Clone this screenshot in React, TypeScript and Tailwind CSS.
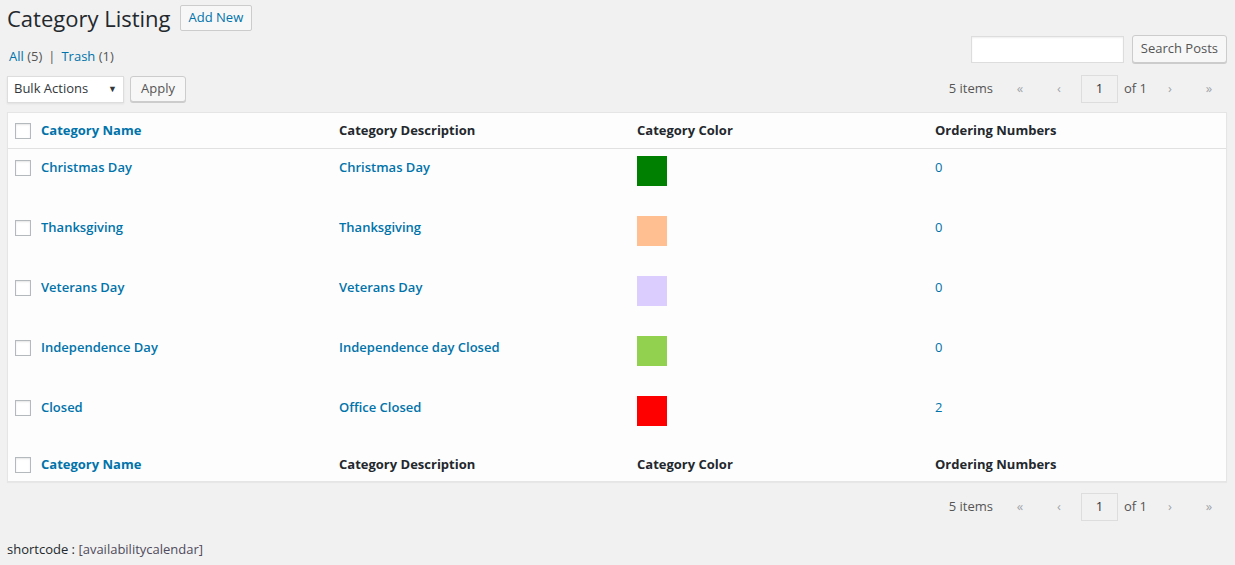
const rows = [
  { name: "Christmas Day", desc: "Christmas Day", color: "bg-[#008000]", order: "0" },
  { name: "Thanksgiving", desc: "Thanksgiving", color: "bg-[#ffbf91]", order: "0" },
  { name: "Veterans Day", desc: "Veterans Day", color: "bg-[#dccdff]", order: "0" },
  { name: "Independence Day", desc: "Independence day Closed", color: "bg-[#92d050]", order: "0" },
  { name: "Closed", desc: "Office Closed", color: "bg-[#ff0000]", order: "2" },
];

function Check() {
  return <span className="block w-4 h-4 border border-[#b4b9be] bg-white shadow-[inset_0_1px_2px_rgba(0,0,0,0.1)]" />;
}

function HeadRow({ h }: { h: string }) {
  return (
    <div className={`flex items-center ${h} text-[13px] font-bold text-[#23282d]`}>
      <div className="w-[33px] pl-[7px]">
        <Check />
      </div>
      <div className="w-[298px] text-[#0073aa]">Category Name</div>
      <div className="w-[298px]">Category Description</div>
      <div className="w-[298px]">Category Color</div>
      <div className="flex-1">Ordering Numbers</div>
    </div>
  );
}

function Pager() {
  return (
    <div className="flex items-center h-[28px] text-[13px] text-[#555]">
      <span className="mr-[20px]">5 items</span>
      <span className="w-[14px] text-center text-[#a0a5aa]">«</span>
      <span className="w-[26px]" />
      <span className="w-[12px] text-center text-[#a0a5aa]">‹</span>
      <span className="w-[16px]" />
      <span className="w-[37px] h-[28px] border border-[#ddd] bg-[#f1f1f1] flex items-center justify-center text-[#32373c]">1</span>
      <span className="ml-[6px]">of 1</span>
      <span className="w-[17px]" />
      <span className="w-[12px] text-center text-[#a0a5aa]">›</span>
      <span className="w-[26px]" />
      <span className="w-[14px] text-center text-[#a0a5aa]">»</span>
    </div>
  );
}

export default function App() {
  return (
    <div className="min-h-[565px] bg-[#f1f1f1] text-[#23282d] font-['Open_Sans',sans-serif] text-[13px] px-[7px] pt-[5px]">
      {/* Title */}
      <div className="flex items-center h-[26px]">
        <h1 className="text-[22px] leading-[26px] font-normal text-[#23282d] mr-[9px] -mt-[1px]">Category Listing</h1>
        <button className="h-[26px] px-[8px] border border-[#ccc] bg-[#f7f7f7] rounded-[2px] text-[13px] text-[#0073aa]">
          Add New
        </button>
      </div>

      {/* Filters and search */}
      <div className="flex items-start justify-between h-[34px] mt-[4px] pr-[1px]">
        <div className="pl-[2px] pt-[12px] leading-[18px] text-[#555]">
          <span className="text-[#0073aa]">All</span> <span className="text-[#555]">(5)</span>
          <span className="mx-[6px]">|</span>
          <span className="text-[#0073aa]">Trash</span> <span>(1)</span>
        </div>
        <div className="flex items-center gap-[8px]">
          <input className="w-[153px] h-[27px] border border-[#ddd] bg-white shadow-[inset_0_1px_2px_rgba(0,0,0,0.07)]" />
          <button className="h-[28px] px-[8px] border border-[#ccc] bg-[#f7f7f7] rounded-[3px] text-[#555] shadow-[0_1px_0_#ccc]">
            Search Posts
          </button>
        </div>
      </div>

      {/* Bulk actions + pager */}
      <div className="flex items-center justify-between mt-[6px] pr-[12px]">
        <div className="flex items-center gap-[6px]">
          <div className="w-[117px] h-[27px] border border-[#ddd] bg-white flex items-center justify-between pl-[6px] pr-[6px] text-[#32373c] shadow-[0_1px_2px_rgba(0,0,0,0.07)]">
            <span>Bulk Actions</span>
            <span className="text-[9px]">▼</span>
          </div>
          <button className="h-[26px] px-[10px] border border-[#ccc] bg-[#f7f7f7] rounded-[3px] text-[#555] shadow-[0_1px_0_#ccc]">
            Apply
          </button>
        </div>
        <Pager />
      </div>

      {/* Table */}
      <div className="mt-[9px] w-[1220px] border border-[#e5e5e5] bg-[#fdfdfd] shadow-[0_1px_1px_rgba(0,0,0,0.04)]">
        <div className="border-b border-[#e1e1e1]">
          <HeadRow h="h-[35px]" />
        </div>
        {rows.map((r) => (
          <div key={r.name} className="flex items-start h-[60px] pt-[9px] text-[13px] text-[#0073aa]">
            <div className="w-[33px] pl-[7px] pt-[2px]">
              <Check />
            </div>
            <div className="w-[298px] font-semibold">{r.name}</div>
            <div className="w-[298px] font-semibold">{r.desc}</div>
            <div className="w-[298px]">
              <span className={`block w-[30px] h-[30px] -mt-[2px] ${r.color}`} />
            </div>
            <div className="flex-1">{r.order}</div>
          </div>
        ))}
        <HeadRow h="h-[32px]" />
      </div>

      {/* Bottom pager */}
      <div className="flex justify-end mt-[11px] pr-[12px]">
        <Pager />
      </div>

      <div className="mt-[19px]">
        shortcode : <span className="text-[#4f4a5c]">[availabilitycalendar]</span>
      </div>
    </div>
  );
}
